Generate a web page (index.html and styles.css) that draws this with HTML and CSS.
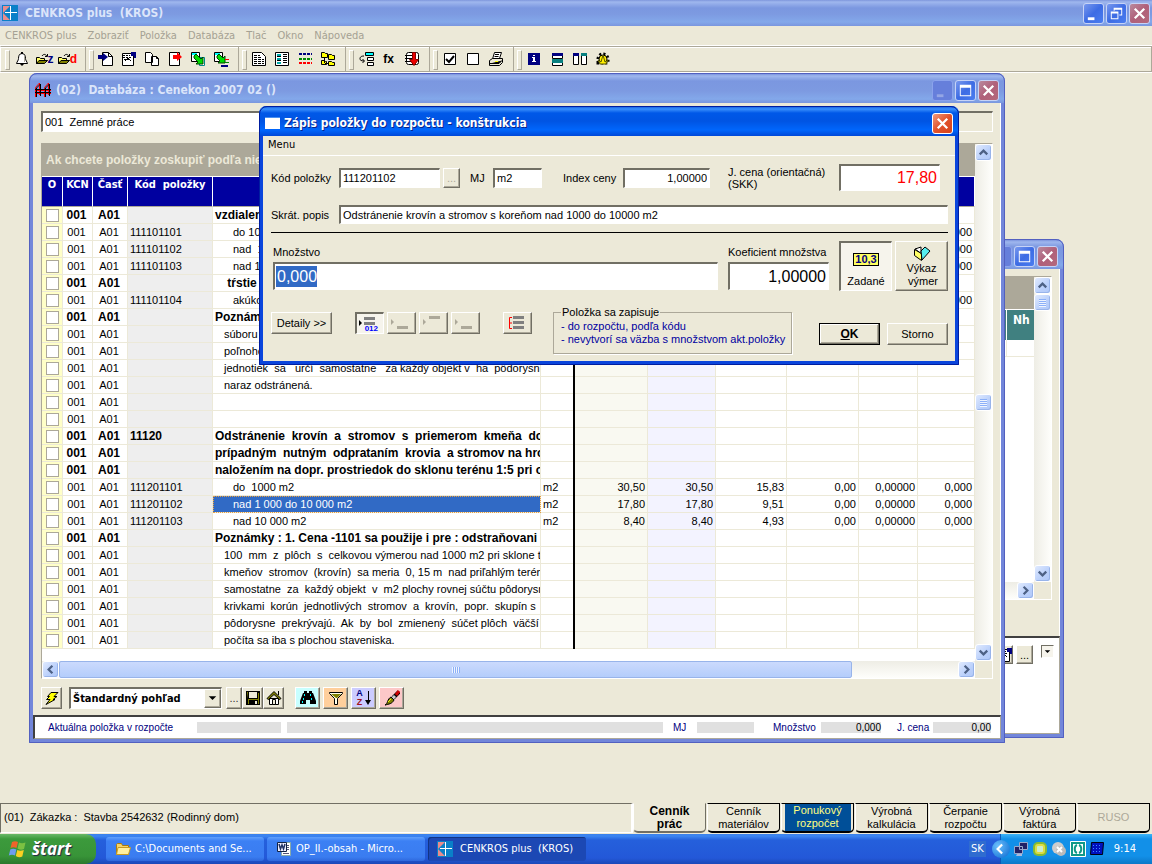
FILE: index.html
```html
<!DOCTYPE html>
<html lang="sk">
<head>
<meta charset="utf-8">
<title>CENKROS plus (KROS)</title>
<link rel="stylesheet" href="styles.css">
</head>
<body>
<svg class="defs" aria-hidden="true">
  <symbol id="logo" viewBox="0 0 16 16"><path fill="#0a80c8" d="M0 0h16v16H0z"/><path fill="#e98c8c" d="M1 1h7L1 8zM1 8l7 7H1z"/><path stroke="#fff" d="M8.500 1v14M3 7.500h12"/></symbol>
  <symbol id="min" viewBox="0 0 20 20"><path fill="#fff" d="M4 14h7v3H4z"/></symbol>
  <symbol id="max" viewBox="0 0 20 20"><path fill="#fff" fill-rule="evenodd" d="M4 4h12v12H4zM5 7v8h10V7z"/></symbol>
  <symbol id="restore" viewBox="0 0 20 20"><path fill="#fff" fill-rule="evenodd" d="M7 4h9v8h-3v-1h2V6H8v1H7zM4 8h8v8H4zM5 10v5h6v-5z"/></symbol>
  <symbol id="close" viewBox="0 0 20 20"><path stroke="#fff" stroke-width="2.400" d="M5 5l10 10M15 5L5 15"/></symbol>
  <symbol id="up" viewBox="0 0 16 16"><path fill="none" stroke="#4d6185" stroke-width="2.400" d="M4 10l4-4 4 4"/></symbol>
  <symbol id="down" viewBox="0 0 16 16"><path fill="none" stroke="#4d6185" stroke-width="2.400" d="M4 6l4 4 4-4"/></symbol>
  <symbol id="left" viewBox="0 0 16 16"><path fill="none" stroke="#4d6185" stroke-width="2.400" d="M10 4L6 8l4 4"/></symbol>
  <symbol id="right" viewBox="0 0 16 16"><path fill="none" stroke="#4d6185" stroke-width="2.400" d="M6 4l4 4-4 4"/></symbol>
  <symbol id="tri" viewBox="0 0 16 16"><path d="M4 6h8l-4 4z"/></symbol>
  <symbol id="fence" viewBox="0 0 16 16"><path fill="none" stroke="#f00" d="M.5 15V5.500l4-4.500v12M9.500 15V5.500l4-4.500v12M0 8.500h16M0 11.500h16"/><path fill="none" stroke="#000" d="M1.500 15V6l4-4v12M10.500 15V6l4-4v12M0 7.500h16M0 10.500h16"/></symbol>
  <symbol id="bell" viewBox="0 0 16 16"><path fill="#fff" stroke="#000" d="M8 2.500c-3 0-3.500 3-3.500 5S3 10.500 2.500 12.500h11C13 10.500 11.500 9.500 11.500 7.500s-.5-5-3.500-5z"/><path d="M7 1h2v2H7zM6 13h4l-2 2z"/><path fill="#aca899" d="M10 5h1v6h-1z"/></symbol>
  <symbol id="open" viewBox="0 0 12 14"><path fill="#ff6" stroke="#000" d="M.5 11.500v-6h3l1 1h4v2H11l-3 3z"/><path fill="#808000" stroke="#000" d="M.5 11.500l2.500-3h8.500l-3 3z"/><path fill="none" stroke="#000" d="M6 4c2-3 4-1 5 0M9 4.500h2.500V2"/></symbol>
  <symbol id="pagein" viewBox="0 0 16 16"><path fill="#fff" stroke="#000" d="M4.500 1.500h6l4 4v9h-10z"/><path fill="none" stroke="#000" d="M10.500 1.500v4h4"/><path fill="#000080" d="M0 4h5V2l5 4-5 4V8H0z"/></symbol>
  <symbol id="props" viewBox="0 0 16 16"><path fill="#fff" stroke="#000" d="M1.500 2.500h11v12h-11z"/><path stroke="#000" stroke-dasharray="2 1" d="M2 4.500h7M2 6.500h8M3 8.500h6"/><path fill="#000080" d="M10 1h5v6h-2V5h-3z"/><path fill="none" stroke="#000" d="M4 10l3-3 3 3"/></symbol>
  <symbol id="copy" viewBox="0 0 16 16"><path fill="#fff" stroke="#000" d="M1.500 1.500h5l2 2v8h-7zM7.500 5.500h5l2 2v7h-7z"/><path fill="none" stroke="#000" d="M12.500 5.500v2h2"/></symbol>
  <symbol id="pageout" viewBox="0 0 16 16"><path fill="#fff" stroke="#000" d="M2.500 1.500h10v13h-10z"/><path fill="#f00" d="M6 4h4V1l5 5-5 4V8H6z"/></symbol>
  <symbol id="exp1" viewBox="0 0 16 16"><path fill="#fff" stroke="#000" d="M1.500 1.500h8v9h-8z"/><path fill="#0ff" d="M2 2h5v2H2z"/><path fill="#fff" stroke="#088" d="M9.500 6.500h5v8h-5z"/><path fill="#0d0" stroke="#040" d="M4 5l2-2 5 5 2-2v7H6l2-2-4-4z"/></symbol>
  <symbol id="exp2" viewBox="0 0 16 16"><path fill="#fff" stroke="#000" d="M1.500 1.500h8v9h-8z"/><path fill="#0ff" d="M2 2h5v2H2z"/><path fill="#0d0" stroke="#040" d="M4 5l2-2 4 4 2-2v7H5l2-2-3-3z"/><path fill="#f00" d="M12 8h4v1h-4z"/><path fill="#080" d="M12 11h4v1h-4z"/><path fill="#000080" d="M8 14h7v2H8z"/></symbol>
  <symbol id="doc" viewBox="0 0 16 16"><path fill="#fff" stroke="#000" d="M1.500 1.500h9l4 4v9h-13z"/><path stroke="#000" stroke-dasharray="3 1" d="M3 4.500h6M3 6.500h7M3 8.500h10M3 10.500h10M3 12.500h10"/></symbol>
  <symbol id="form" viewBox="0 0 16 16"><path fill="#fff" stroke="#000" d="M1.500 1.500h13v13h-13z"/><path stroke="#0aa" stroke-width="2" d="M3 4h4M3 8h4M3 12h4"/><path stroke="#000" d="M3 5.500h4M3 9.500h4M9 3.500h4M9 5.500h4M9 7.500h4M9 9.500h4M9 11.500h4"/></symbol>
  <symbol id="lines" viewBox="0 0 16 16"><path stroke="#000080" stroke-width="2" stroke-dasharray="3 1" d="M2 3h13"/><path stroke="#080" stroke-width="2" stroke-dasharray="3 1" d="M2 8h13"/><path stroke="#f00" stroke-width="2" stroke-dasharray="3 1" d="M2 12h13"/></symbol>
  <symbol id="folders" viewBox="0 0 16 16"><path fill="#ff0" stroke="#000" d="M1.500 1.500h3l1 1h2v4h-6zM8.500 3.500h3l1 1h2v4h-6zM8.500 10.500h3l1 1h2v3h-6zM1.500 9.500h3l1 1h1v3h-5z"/><path stroke="#000" d="M4.500 7v5M5 12.500h3"/></symbol>
  <symbol id="tree" viewBox="0 0 16 16"><path fill="#0ff" stroke="#000" d="M7.500 1.500h8v3h-8z"/><path fill="#fff" stroke="#000" d="M9.500 6.500h6v3h-6zM9.500 11.500h6v3h-6z"/><path fill="none" stroke="#000" d="M6 5c-4 0-4 2-4 3s1 2 4 2M4.500 8l2 2-2 2"/></symbol>
  <symbol id="dbdown" viewBox="0 0 16 16"><rect x="2.500" y="1.500" width="12" height="12" rx="2" fill="#fff" stroke="#000"/><path stroke="#000" d="M1 4.500h9M1 7.500h9M1 10.500h9"/><path fill="#e00" stroke="#800" d="M8.500 1.500h3v7h3L10 14.500 5.500 8.500h3z"/></symbol>
  <symbol id="checked" viewBox="0 0 16 16"><path fill="#fff" stroke="#000" d="M2.500 2.500h11v11h-11z"/><path fill="none" stroke="#000" stroke-width="2" d="M4 8l3 3 5-6"/></symbol>
  <symbol id="unchecked" viewBox="0 0 16 16"><path fill="#fff" stroke="#000" d="M2.500 2.500h11v11h-11z"/></symbol>
  <symbol id="print" viewBox="0 0 16 16"><path fill="#fff" stroke="#000" d="M4.500 8l2-6.500h7l-2 6"/><path stroke="#000" d="M7 3.500h4M6.500 5.500h4"/><path fill="#ece9d8" stroke="#000" d="M1.500 9.500l3-2h10v4l-3 3h-10z"/><path stroke="#000" d="M2 12.500h9l3-3"/><path fill="#ff0" d="M7 10h3v1H7z"/></symbol>
  <symbol id="info" viewBox="0 0 16 16"><path fill="#000080" d="M2 2h12v12H2z"/><path fill="#fff" d="M7 4h2v1H7zM6 6h3v4h1v1H6v-1h1V7H6z"/></symbol>
  <symbol id="tileh" viewBox="0 0 16 16"><path fill="#fff" stroke="#000" d="M3.500 2.500h10v5h-10zM3.500 9.500h10v5h-10z"/><path fill="#000080" d="M3 2h11v3H3z"/><path fill="#088080" d="M3 8h11v4H3z"/></symbol>
  <symbol id="tilev" viewBox="0 0 16 16"><path fill="#fff" stroke="#000" d="M1.500 2.500h5v11h-5zM9.500 2.500h5v11h-5z"/><path fill="#000080" d="M1 2h6v3H1z"/><path fill="#088080" d="M9 2h6v3H9z"/></symbol>
  <symbol id="gear" viewBox="0 0 16 16"><path fill="none" stroke="#000" stroke-width="3" stroke-dasharray="2 2" d="M3 12V8a5 5 0 0 1 10 0v4z"/><circle cx="8" cy="8" r="4" fill="#fe0" stroke="#000"/><path fill="#fe0" stroke="#550" d="M3 9l3 2 2-7 2 7 3-2-2 4H5z"/></symbol>
  <symbol id="bolt" viewBox="0 0 16 16"><path fill="#ff0" stroke="#000" d="M7 2.500h7l-4 4h3l-4 3h2l-9 5 4-5H2.500l3-3H3.500z"/></symbol>
  <symbol id="save" viewBox="0 0 16 16"><path fill="#000" d="M1 1h14v14H1z"/><path fill="#ece9d8" d="M4 2h8v6H4zM10 11h2v3h-2z"/><path fill="#808000" d="M2 2h1v12h1v-4h9v4h1V3h-1v6H3z"/></symbol>
  <symbol id="home" viewBox="0 0 16 16"><path fill="#fff" stroke="#000" d="M3.500 8.500h9v6h-9z"/><path fill="#808000" stroke="#000" d="M1 8.500L8 1.500l7 7-1.500 1L8 4.500l-5.500 5z"/><path stroke="#000" d="M12.500 1v4"/><path fill="#ece9d8" stroke="#000" d="M6.500 9.500h3v5h-3z"/></symbol>
  <symbol id="bino" viewBox="0 0 16 16"><path d="M4 1h3v2h2V1h3v2h1l3 8v3h-6v-4H6v4H0v-3l3-8h1z"/><path fill="#0ff" d="M4 4h1v2H4zM3 8h1v2H3zM2 11h1v2H2zM10 4h1v2h-1zM11 8h1v2h-1z"/></symbol>
  <symbol id="filter" viewBox="0 0 16 16"><path fill="#ffe" stroke="#000" d="M1.500 2.500h13v1l-5 5v6h-3v-6l-5-5z"/><path fill="#808000" d="M3 4h10l-4 4H8z"/></symbol>
  <symbol id="brush" viewBox="0 0 16 16"><path stroke="#000" stroke-width="4" d="M9 8l6-6"/><path stroke="#c00" stroke-width="3" d="M12 5l3-4"/><path stroke="#ccc" stroke-width="3" d="M8 9l3-3"/><path fill="#808000" stroke="#000" d="M7 7l3 3c-2 4-5 4-9 5 3-1 2-6 6-8z"/><path stroke="#ff0" d="M4 12l3-3"/></symbol>
  <symbol id="lineins" viewBox="0 0 24 16"><path d="M1 4l3 3-3 3z"/><path stroke="#808080" stroke-width="3" d="M6 2.500h11M6 7.500h11"/></symbol>
  <symbol id="linelow" viewBox="0 0 24 16"><path fill="#aca899" d="M1 4l3 3-3 3z"/><path stroke="#aca899" stroke-width="3" d="M7 12.500h11"/></symbol>
  <symbol id="linetop" viewBox="0 0 24 16"><path fill="#aca899" d="M1 4l3 3-3 3z"/><path stroke="#aca899" stroke-width="3" d="M7 2.500h11"/></symbol>
  <symbol id="outline" viewBox="0 0 24 16"><path fill="none" stroke="#f00" d="M6 2.500H3.500v11H6M3.500 8H6"/><path stroke="#808080" stroke-width="3" d="M7 2.500h11M7 7.500h11M7 12.500h11"/></symbol>
  <symbol id="book" viewBox="0 0 18 16"><path fill="#ff6" stroke="#000" d="M1.500 3.500l7 4v7l-7-5z"/><path fill="#fff" stroke="#000" d="M2 3l6-2v5l1 2z"/><path fill="#5ee" stroke="#000" d="M8 5l4-4 5 4-8 9z"/></symbol>
  <symbol id="flag" viewBox="0 0 20 20"><path fill="#f0632a" d="M4 3c2-1 4-1 6 0L8.500 9c-2-1-4-1-6 0z"/><path fill="#7cc142" d="M11 3.500c2 1 4 1 6.500 0L16 10c-2 1-4 1-6.500-.5z"/><path fill="#6f9df0" d="M2.300 10.500c2-1 4-1 6 0L7 16.500c-2-1-4-1-6.200 0z"/><path fill="#fbd022" d="M9.300 11c2 1 4 1 6.500 0l-1.500 6.500c-2 1-4 1-6.500-.5z"/></symbol>
  <symbol id="folder" viewBox="0 0 16 16"><path fill="#f6d468" stroke="#a87a10" d="M1.500 13.500v-10l1-1h4l1 2h6v9z"/><path fill="#ffef9e" stroke="#c89a20" d="M1.500 13.500l1.500-7h12.500l-2 7z"/></symbol>
  <symbol id="word" viewBox="0 0 16 16"><path fill="#fff" stroke="#8aa" d="M5.500 1.500h9v13h-9z"/><path stroke="#557" d="M11 4.500h2M11 6.500h2M11 8.500h2M7 12.500h6"/><path fill="#eef" stroke="#124" d="M1.500 1.500h9v9h-9z"/><path fill="none" stroke="#236" stroke-width="1.500" d="M3 3l1.500 5L6 4l1.500 4L9 3"/></symbol>
  <symbol id="net" viewBox="0 0 16 16"><path fill="#226" stroke="#9ac" d="M6.500 1.500h8v7h-8zM1.500 5.500h8v7h-8z"/><path fill="#abd" d="M4 13h5v2H3z"/></symbol>
  <symbol id="sun" viewBox="0 0 16 16"><rect x="1" y="1" width="14" height="14" rx="5" fill="#8b3"/><rect x="4" y="4" width="8" height="8" rx="2" fill="#cec" stroke="#dd4" stroke-width="2"/></symbol>
  <symbol id="mute" viewBox="0 0 16 16"><circle cx="7" cy="7" r="6" fill="#ccc"/><circle cx="10" cy="10" r="5" fill="#bbb"/><path stroke="#fff" stroke-width="2" d="M6 6l5 5M11 6l-5 5"/></symbol>
  <symbol id="sync" viewBox="0 0 16 16"><path fill="#198" stroke="#fff" d="M.5 .5h15v15H.5z"/><path fill="#fff" d="M3 3h10v10H3z"/><path fill="none" stroke="#198" stroke-width="2" d="M7 4c-3 1-3 7 0 8M9 4c3 1 3 7 0 8"/></symbol>
  <symbol id="chip" viewBox="0 0 16 16"><path fill="#0010c0" stroke="#001" d="M2.500 1.500h12l-1 12h-12z"/><path stroke="#48f" stroke-dasharray="1 2" d="M4 4.500h8M4 7.500h8M4 10.500h7"/></symbol>
</svg>

<header class="caption">
  <svg class="ic"><use href="#logo"/></svg><h1>CENKROS plus&nbsp; (KROS)</h1>
  <div class="winbtns">
    <button class="wb" aria-label="Minimalizovať"><svg><use href="#min"/></svg></button>
    <button class="wb" aria-label="Obnoviť"><svg><use href="#restore"/></svg></button>
    <button class="wb dimred" aria-label="Zavrieť"><svg><use href="#close"/></svg></button>
  </div>
</header>
<nav class="menubar">
  <span>CENKROS plus</span><span>Zobraziť</span><span>Položka</span><span>Databáza</span><span>Tlač</span><span>Okno</span><span>Nápoveda</span>
</nav>
<div class="toolbar">
  <div class="tgroup">
    <button aria-label="Upozornenia"><svg><use href="#bell"/></svg></button>
    <button class="two" aria-label="Otvoriť z"><svg><use href="#open"/></svg><b class="z">z</b></button>
    <button class="two" aria-label="Otvoriť d"><svg><use href="#open"/></svg><b class="d">d</b></button>
  </div>
  <div class="tgroup">
    <button aria-label="Vložiť"><svg><use href="#pagein"/></svg></button>
    <button aria-label="Vlastnosti"><svg><use href="#props"/></svg></button>
    <button aria-label="Kopírovať"><svg><use href="#copy"/></svg></button>
    <button aria-label="Vybrať"><svg><use href="#pageout"/></svg></button>
    <button aria-label="Presun"><svg><use href="#exp1"/></svg></button>
    <button aria-label="Presun riadkov"><svg><use href="#exp2"/></svg></button>
  </div>
  <div class="tgroup">
    <button aria-label="Dokument"><svg><use href="#doc"/></svg></button>
    <button aria-label="Formulár"><svg><use href="#form"/></svg></button>
    <button aria-label="Riadky"><svg><use href="#lines"/></svg></button>
    <button aria-label="Skupiny"><svg><use href="#folders"/></svg></button>
  </div>
  <div class="tgroup">
    <button aria-label="Strom"><svg><use href="#tree"/></svg></button>
    <button aria-label="Funkcia"><b class="fx">fx</b></button>
    <button aria-label="Stiahnuť"><svg><use href="#dbdown"/></svg></button>
  </div>
  <div class="tgroup">
    <button aria-label="Označiť"><svg><use href="#checked"/></svg></button>
    <button aria-label="Zrušiť označenie"><svg><use href="#unchecked"/></svg></button>
    <button aria-label="Tlač"><svg><use href="#print"/></svg></button>
  </div>
  <div class="tgroup last">
    <button aria-label="Info"><svg><use href="#info"/></svg></button>
    <button aria-label="Vodorovne"><svg><use href="#tileh"/></svg></button>
    <button aria-label="Zvislo"><svg><use href="#tilev"/></svg></button>
    <button aria-label="Nastavenia"><svg><use href="#gear"/></svg></button>
  </div>
</div>

<main class="desk">
  <section class="win back">
    <div class="wtitle">
      <div class="winbtns">
        <button class="wb dim" aria-label="Minimalizovať"></button>
        <button class="wb" aria-label="Maximalizovať"><svg><use href="#max"/></svg></button>
        <button class="wb dimred" aria-label="Zavrieť"><svg><use href="#close"/></svg></button>
      </div>
    </div>
    <div class="bbody">
      <div class="grid">
        <div class="gmain">
          <div class="groupbar"></div>
          <div class="nhrow"><span>Nh</span></div>
          <div class="nhcell"><span></span></div>
        </div>
        <div class="vs"><i class="sb"><svg><use href="#up"/></svg></i><i class="sb grip"></i><i class="push"></i><i class="sb"><svg><use href="#down"/></svg></i></div>
        <div class="hs"><i class="push"></i><i class="sb"><svg><use href="#right"/></svg></i></div>
        <div class="corner"></div>
      </div>
      <div class="bpanel">
        <button class="bev sm" aria-label="Vlastnosti"><svg class="ic"><use href="#props"/></svg></button>
        <button class="bev sm">...</button>
        <button class="ddown" aria-label="Rozbaliť"><svg><use href="#tri"/></svg></button>
      </div>
    </div>
  </section>

  <section class="win db">
    <div class="wtitle">
      <svg class="ic"><use href="#fence"/></svg><h2>(02)&nbsp; Databáza : Cenekon 2007 02 ()</h2>
      <div class="winbtns">
        <button class="wb dim" aria-label="Minimalizovať"><svg><use href="#min"/></svg></button>
        <button class="wb" aria-label="Maximalizovať"><svg><use href="#max"/></svg></button>
        <button class="wb dimred" aria-label="Zavrieť"><svg><use href="#close"/></svg></button>
      </div>
    </div>
    <div class="dbody">
      <div class="path"><input class="field" aria-label="Kapitola" value="001  Zemné práce"></div>
      <div class="grid">
        <div class="gmain">
          <div class="groupbar">Ak chcete položky zoskupiť podľa nie</div>
          <table class="items">
            <colgroup><col class="c1"><col class="c2"><col class="c3"><col class="c4"><col><col class="c6"><col class="c7"><col class="c8"><col class="c9"><col class="c10"><col class="c11"><col class="c12"></colgroup>
            <thead><tr><th>O<th>KCN<th>Časť<th>Kód&nbsp; položky<th><th><th><th><th><th><th><th></tr></thead>
            <tbody>
            <tr class="b"><td><input type="checkbox" aria-label="Označiť"><td>001<td>A01<td><td>vzdialen<td><td><td><td><td><td><td>
            <tr class="i"><td><input type="checkbox" aria-label="Označiť"><td>001<td>A01<td>111101101<td>do 1000<td>m2<td><td><td><td>0,00<td>0,00000<td>0,000
            <tr class="i"><td><input type="checkbox" aria-label="Označiť"><td>001<td>A01<td>111101102<td>nad  1000<td>m2<td><td><td><td>0,00<td>0,00000<td>0,000
            <tr class="i"><td><input type="checkbox" aria-label="Označiť"><td>001<td>A01<td>111101103<td>nad 10 000<td>m2<td><td><td><td>0,00<td>0,00000<td>0,000
            <tr class="b n"><td><input type="checkbox" aria-label="Označiť"><td>001<td>A01<td><td> tŕstie<td><td><td><td><td><td><td>
            <tr class="i"><td><input type="checkbox" aria-label="Označiť"><td>001<td>A01<td>111101104<td>akúkoľvek<td>m2<td><td><td><td>0,00<td>0,00000<td>0,000
            <tr class="b"><td><input type="checkbox" aria-label="Označiť"><td>001<td>A01<td><td>Poznámky :<td><td><td><td><td><td><td>
            <tr class="n"><td><input type="checkbox" aria-label="Označiť"><td>001<td>A01<td><td>súboru<td><td><td><td><td><td><td>
            <tr class="n"><td><input type="checkbox" aria-label="Označiť"><td>001<td>A01<td><td>poľnohosp.<td><td><td><td><td><td><td>
            <tr class="n"><td><input type="checkbox" aria-label="Označiť"><td>001<td>A01<td><td>jednotiek  sa   určí  samostatne   za každý objekt v  ha  pôdorysn<td><td><td><td><td><td><td>
            <tr class="n"><td><input type="checkbox" aria-label="Označiť"><td>001<td>A01<td><td>naraz odstránená.<td><td><td><td><td><td><td>
            <tr><td><input type="checkbox" aria-label="Označiť"><td>001<td>A01<td><td><td><td><td><td><td><td><td>
            <tr><td><input type="checkbox" aria-label="Označiť"><td>001<td>A01<td><td><td><td><td><td><td><td><td>
            <tr class="b"><td><input type="checkbox" aria-label="Označiť"><td>001<td>A01<td>11120<td>Odstránenie  krovín  a  stromov  s  priemerom  kmeňa  do<td><td><td><td><td><td><td>
            <tr class="b"><td><input type="checkbox" aria-label="Označiť"><td>001<td>A01<td><td>prípadným  nutným  odprataním  krovia  a stromov na hro<td><td><td><td><td><td><td>
            <tr class="b"><td><input type="checkbox" aria-label="Označiť"><td>001<td>A01<td><td>naložením na dopr. prostriedok do sklonu terénu 1:5 pri o<td><td><td><td><td><td><td>
            <tr class="i"><td><input type="checkbox" aria-label="Označiť"><td>001<td>A01<td>111201101<td>do  1000 m2<td>m2<td>30,50<td>30,50<td>15,83<td>0,00<td>0,00000<td>0,000
            <tr class="i sel"><td><input type="checkbox" aria-label="Označiť"><td>001<td>A01<td>111201102<td>nad 1 000 do 10 000 m2<td>m2<td>17,80<td>17,80<td>9,51<td>0,00<td>0,00000<td>0,000
            <tr class="i"><td><input type="checkbox" aria-label="Označiť"><td>001<td>A01<td>111201103<td>nad 10 000 m2<td>m2<td>8,40<td>8,40<td>4,93<td>0,00<td>0,00000<td>0,000
            <tr class="b"><td><input type="checkbox" aria-label="Označiť"><td>001<td>A01<td><td>Poznámky : 1. Cena -1101 sa použije i pre : odstraňovani<td><td><td><td><td><td><td>
            <tr class="n"><td><input type="checkbox" aria-label="Označiť"><td>001<td>A01<td><td>100  mm  z  plôch  s  celkovou výmerou nad 1000 m2 pri sklone te<td><td><td><td><td><td><td>
            <tr class="n"><td><input type="checkbox" aria-label="Označiť"><td>001<td>A01<td><td>kmeňov  stromov  (krovín)  sa meria  0, 15 m  nad priľahlým terén<td><td><td><td><td><td><td>
            <tr class="n"><td><input type="checkbox" aria-label="Označiť"><td>001<td>A01<td><td>samostatne  za  každý objekt  v  m2 plochy rovnej súčtu pôdorysn<td><td><td><td><td><td><td>
            <tr class="n"><td><input type="checkbox" aria-label="Označiť"><td>001<td>A01<td><td>krivkami  korún  jednotlivých  stromov  a  krovín,  popr.  skupín s<td><td><td><td><td><td><td>
            <tr class="n"><td><input type="checkbox" aria-label="Označiť"><td>001<td>A01<td><td>pôdorysne  prekrývajú.  Ak  by  bol  zmienený  súčet plôch  väčší<td><td><td><td><td><td><td>
            <tr class="n"><td><input type="checkbox" aria-label="Označiť"><td>001<td>A01<td><td>počíta sa iba s plochou staveniska.<td><td><td><td><td><td><td>
            </tbody>
          </table>
        </div>
        <div class="vs"><i class="sb"><svg><use href="#up"/></svg></i><i class="push"></i><i class="sb grip"></i><i class="push"></i><i class="sb"><svg><use href="#down"/></svg></i></div>
        <div class="hs"><i class="sb"><svg><use href="#left"/></svg></i><i class="thumb"></i><i class="push"></i><i class="sb"><svg><use href="#right"/></svg></i></div>
        <div class="corner"></div>
      </div>
      <div class="dbtools">
        <button class="bev tb" aria-label="Spustiť"><svg class="ic"><use href="#bolt"/></svg></button>
        <div class="combo"><select aria-label="Pohľad"><option>Štandardný pohľad</option></select><i class="bev"><svg><use href="#tri"/></svg></i></div>
        <div class="trio">
          <button class="bev dots">...</button>
          <button class="bev tb" aria-label="Uložiť"><svg class="ic"><use href="#save"/></svg></button>
          <button class="bev tb" aria-label="Domov"><svg class="ic"><use href="#home"/></svg></button>
        </div>
        <div class="quad">
          <button class="bev cy" aria-label="Hľadať"><svg class="ic"><use href="#bino"/></svg></button>
          <button class="bev or" aria-label="Filter"><svg class="ic"><use href="#filter"/></svg></button>
          <button class="bev vi az" aria-label="Triediť"><span><b>A</b><b class="zz">Z</b></span><svg viewBox="0 0 6 16"><path stroke="#000" stroke-width="1" d="M3.500 1v11"/><path d="M0 10h6l-3 5z"/></svg></button>
          <button class="bev pk" aria-label="Farby"><svg class="ic"><use href="#brush"/></svg></button>
        </div>
      </div>
    </div>
    <div class="dbinfo">
      <span class="l1">Aktuálna položka v rozpočte</span><output class="o1"></output><output class="o2"></output>
      <span class="l2">MJ</span><output class="o3"></output>
      <span class="l3">Množstvo</span><output class="o4">0,000</output>
      <span class="l4">J. cena</span><output class="o5">0,00</output>
    </div>
  </section>

  <section class="dlg" role="dialog" aria-label="Zápis položky do rozpočtu">
    <div class="dtitle"><i class="appicon"></i><h2>Zápis položky do rozpočtu - konštrukcia</h2>
      <button class="wb red" aria-label="Zavrieť"><svg><use href="#close"/></svg></button></div>
    <div class="dmenu">Menu</div>
    <form class="dform">
      <div class="row ra">
        <label class="lab" for="kod">Kód položky</label><input class="field kod" id="kod" value="111201102">
        <button type="button" class="bev dd3">...</button>
        <label class="mjl" for="mj">MJ</label><input class="field mj" id="mj" value="m2">
        <label class="idl" for="idx">Index ceny</label><input class="field idx" id="idx" value="1,00000">
        <label class="jcl" for="jc">J. cena (orientačná)<br>(SKK)</label><input class="field jc" id="jc" value="17,80">
      </div>
      <div class="row rb"><label class="lab" for="pop">Skrát. popis</label><input class="field pop" id="pop" value="Odstránenie krovín a stromov s koreňom nad 1000 do 10000 m2"></div>
      <hr>
      <div class="row rc">
        <div class="stack mn"><label for="mnoz">Množstvo</label><input class="field big marked" id="mnoz" value="0,000"></div>
        <div class="stack kf"><label for="koef">Koeficient množstva</label><input class="field big right" id="koef" value="1,00000"></div>
        <div class="pair">
          <button type="button" class="tall pressed"><b class="num">10,3</b><span>Zadané</span></button>
          <button type="button" class="tall bev"><svg class="bk"><use href="#book"/></svg><span>Výkaz<br>&nbsp;výmer</span></button>
        </div>
      </div>
      <div class="row rd">
        <button type="button" class="bev det">Detaily &gt;&gt;</button>
        <div class="modes">
          <button type="button" class="mode pressed" aria-label="Režim 1"><svg><use href="#lineins"/></svg><b>012</b></button>
          <button type="button" class="mode bev" aria-label="Režim 2"><svg><use href="#linelow"/></svg></button>
          <button type="button" class="mode bev" aria-label="Režim 3"><svg><use href="#linetop"/></svg></button>
          <button type="button" class="mode bev" aria-label="Režim 4"><svg><use href="#linelow"/></svg></button>
        </div>
        <button type="button" class="mode bev out" aria-label="Osnova"><svg><use href="#outline"/></svg></button>
        <fieldset><legend>Položka sa zapisuje</legend>- do rozpočtu, podľa kódu<br>- nevytvorí sa väzba s množstvom akt.položky</fieldset>
        <div class="okrow">
          <button type="button" class="ok"><u>O</u>K</button>
          <button type="button" class="bev storno">Storno</button>
        </div>
      </div>
    </form>
  </section>
</main>

<footer class="status">
  <div class="job">(01)&nbsp; Zákazka :&nbsp; Stavba 2542632 (Rodinný dom)</div>
  <div class="tabs">
    <button class="tab on">Cenník<br>prác</button>
    <button class="tab">Cenník<br>materiálov</button>
    <button class="tab blue"><span>Ponukový<br>rozpočet</span></button>
    <button class="tab">Výrobná<br>kalkulácia</button>
    <button class="tab">Čerpanie<br>rozpočtu</button>
    <button class="tab">Výrobná<br>faktúra</button>
    <button class="tab off" disabled>RUSO</button>
  </div>
</footer>
<div class="taskbar">
  <button class="start"><svg><use href="#flag"/></svg>štart</button>
  <div class="tasks">
    <button><svg class="ic"><use href="#folder"/></svg>C:\Documents and Se...</button>
    <button><svg class="ic"><use href="#word"/></svg>OP_II.-obsah - Micro...</button>
    <button class="act"><svg class="ic"><use href="#logo"/></svg>CENKROS plus&nbsp; (KROS)</button>
  </div>
  <span class="lang">SK</span>
  <div class="tray">
    <button class="chev" aria-label="Zobraziť ikony"><svg viewBox="0 0 16 16"><path fill="none" stroke="#fff" stroke-width="2" d="M9 4L5 8l4 4"/></svg></button>
    <svg class="ic"><use href="#net"/></svg><svg class="ic"><use href="#sun"/></svg><svg class="ic"><use href="#mute"/></svg><svg class="ic"><use href="#sync"/></svg><svg class="ic"><use href="#chip"/></svg>
    <time>9:14</time>
  </div>
</div>
</body>
</html>
```
FILE: styles.css
```css
* { box-sizing: border-box; }
body { margin: 0; min-height: 100vh; display: flex; flex-direction: column; background: #ece9d8; color: #000; font: 11px/12px "Liberation Sans", Arial, sans-serif; overflow: hidden; }
button, input, select { font: inherit; color: inherit; margin: 0; padding: 0; border-radius: 0; }
button { border: 0; background: none; white-space: nowrap; }
h1, h2 { margin: 0; font: bold 12px/16px "DejaVu Sans Condensed", "DejaVu Sans", sans-serif; white-space: nowrap; }
svg { display: block; }
i { font-style: normal; display: block; }
.defs { position: absolute; width: 0; height: 0; }
.ic { width: 16px; height: 16px; flex: none; }

/* captions */
.caption { height: 26px; display: flex; align-items: center; gap: 7px; padding: 0 2px; background: linear-gradient(#7e96dc, #9fb7ee 2px, #7b97e0 8px, #7d9ae1 14px, #83a8ea 22px, #7a96de); color: #dbe5fa; }
.winbtns { display: flex; gap: 2px; margin-left: auto; }
.wb { width: 21px; height: 21px; border: 1px solid #c6d3f7; border-radius: 3px; background: linear-gradient(135deg, #7898ee, #3d6ce4 50%, #4a7df0); display: flex; align-items: center; justify-content: center; flex: none; }
.wb svg { width: 19px; height: 19px; }
.wb.dim { background: #667fdb; border-color: #8ba3ec; }
.wb.dim svg { opacity: .3; }
.wb.dimred { background: linear-gradient(135deg, #b98a9e, #b0607a 50%, #b4697c); }
.wb.red { background: linear-gradient(135deg, #f09a7c, #e0522c 50%, #d8431c); border-color: #fff; }

.menubar { height: 20px; display: flex; align-items: center; gap: 11px; padding: 0 5px; color: #a5a193; font: 11px/14px "DejaVu Sans Condensed", "DejaVu Sans", sans-serif; }
.toolbar { height: 26px; display: flex; padding-left: 1px; border: 1px solid #aca899; border-left-color: #fff; box-shadow: inset 0 1px #fff, 0 1px #fff, 0 -1px #fff; }
.tgroup { display: flex; align-items: center; padding: 0 6px 0 8px; border-right: 1px solid #aca899; position: relative; }
.tgroup.last { flex: 1; border: 0; }
.tgroup::before { content: ""; position: absolute; left: 3px; top: 3px; width: 3px; height: 18px; border: 1px solid #fff; border-right-color: #aca899; border-bottom-color: #aca899; }
.tgroup button { width: 23px; height: 22px; display: flex; align-items: center; justify-content: center; }
.tgroup svg { width: 16px; height: 16px; flex: none; }
.tgroup .two svg { width: 12px; height: 14px; }
.two b { font-size: 12px; }
.two .z { color: #000080; }
.two .d { color: #f00; }
.fx { font-size: 12px; }

/* workspace windows */
.desk { flex: 1; position: relative; }
.win { position: absolute; display: flex; flex-direction: column; border: solid #7286da; border-width: 0 4px 4px; border-radius: 8px 8px 0 0; background: #ece9d8; box-shadow: inset -1px -1px #fff; outline: 1px solid #5260c0; outline-offset: -1px; }
.win .wtitle { height: 30px; flex: none; margin: 0 -3px; display: flex; align-items: center; gap: 5px; padding: 4px 2px 0 5px; border-radius: 7px 7px 0 0; background: linear-gradient(#6a82d6, #9fb7ee 3px, #7b97e0 8px, #7d9ae1 18px, #83a8ea 26px, #7a96de); color: #dbe5fa; }
.back { left: 400px; right: 88px; top: 167px; bottom: 65px; }
.db { left: 29px; right: 147px; top: 1px; bottom: 60px; }
.wtitle .winbtns { margin-right: 3px; }

.bbody { flex: 1; display: flex; flex-direction: column; padding: 7px 0 0; }
.back .grid { flex: 1; margin: 0 8px 0; }
.grid { display: grid; grid-template: 1fr 17px / 1fr 17px; border: 1px solid #fff; border-top-color: #aca899; border-left-color: #aca899; min-height: 0; }
.gmain { background: #fff; overflow: hidden; }
.groupbar { height: 33px; background: #aca899; color: #ece9d8; font: bold 12px/33px "Liberation Sans", Arial, sans-serif; padding-left: 4px; border-bottom: 1px solid #fff; white-space: nowrap; overflow: hidden; }
.nhrow { height: 30px; background: #408080; color: #fff; font: bold 12px/20px "DejaVu Sans Condensed", sans-serif; display: flex; justify-content: flex-end; }
.nhrow span { border-left: 1px solid #fff; padding: 0 4px 0 6px; width: 28px; }
.nhcell { height: 17px; border-bottom: 1px solid #ece9d8; display: flex; justify-content: flex-end; }
.nhcell span { width: 28px; border-left: 1px solid #ece9d8; }
.vs { background: linear-gradient(90deg, #eeede5, #fefefb); display: flex; flex-direction: column; grid-row: 1; grid-column: 2; }
.hs { background: linear-gradient(#eeede5, #fefefb); display: flex; grid-row: 2; grid-column: 1; }
.corner { background: #ece9d8; }
.push { flex: 1; }
.sb { width: 17px; height: 17px; flex: none; border: 1px solid #fff; border-radius: 3px; background: linear-gradient(135deg, #e0eafe, #bad0fb 60%, #b0c8f8); box-shadow: inset -1px -1px #98b4ea; }
.sb svg { width: 15px; height: 15px; }
.sb.grip::after { content: ""; display: block; width: 7px; height: 8px; margin: 4px; background: repeating-linear-gradient(#8cb0f8 0 1px, #eef4fe 1px 2px); }
.thumb { flex: none; width: 85%; border: 1px solid #98b4ea; border-radius: 2px; background: linear-gradient(#cbdafd, #b4cdfb); display: grid; place-items: center; }
.thumb::after { content: ""; width: 8px; height: 6px; background: repeating-linear-gradient(90deg, #eef4fe 0 1px, #8cb0f8 1px 2px); }
.bpanel { height: 98px; flex: none; margin: 36px 0 0; background: #fff; border-top: 2px solid #404040; border-right: 1px solid #aca899; border-bottom: 1px solid #aca899; display: flex; justify-content: flex-end; align-items: flex-start; gap: 3px; padding: 7px 5px 0; }
.bev { background: #ece9d8; border: 1px solid #fff; border-right-color: #716f64; border-bottom-color: #716f64; box-shadow: inset -1px -1px #aca899; }
.bev.sm { width: 17px; height: 19px; overflow: hidden; }
.ddown { width: 13px; height: 13px; margin-left: 5px; border: 1px solid #716f64; border-right-color: #fff; border-bottom-color: #fff; background: #f6f4ec; }
.ddown svg { width: 11px; height: 11px; }

.dbody { flex: 1; display: flex; flex-direction: column; padding: 8px 8px 6px; min-height: 0; }
.field { border: 1px solid #fff; border-top: 2px solid #716f64; border-left: 2px solid #716f64; background: #fff; padding: 0 2px; outline: 0; min-width: 0; }
.path .field { width: 100%; height: 21px; display: block; background: linear-gradient(90deg, #fff 60%, #ece9d8 60%); }
.db .grid { flex: 1; margin-top: 11px; }
.items { width: 100%; table-layout: fixed; border-collapse: separate; border-spacing: 0; }
.c1 { width: 21px; } .c2 { width: 30px; } .c3 { width: 35px; } .c4 { width: 85px; } .c6 { width: 34px; } .c7 { width: 73px; }
.c8 { width: 68px; } .c9 { width: 71px; } .c10 { width: 72px; } .c11 { width: 59px; } .c12 { width: 57px; }
.items th { height: 30px; background: #0000a0; color: #fff; font: bold 11px/14px "DejaVu Sans Condensed", sans-serif; vertical-align: top; padding: 1px 0 0; border-right: 1px solid #fff; border-bottom: 1px solid #aca899; white-space: nowrap; overflow: hidden; }
.items td { height: 17px; padding: 0 2px; line-height: 15px; border-right: 1px solid #ece9d8; border-bottom: 1px solid #ece9d8; white-space: nowrap; overflow: hidden; text-align: right; }
.items td:nth-child(1) { background: #ffffc8; text-align: center; padding: 0; }
.items td:nth-child(2), .items td:nth-child(3) { text-align: center; padding: 0 2px 0 0; }
.items td:nth-child(4) { background: #eee; text-align: left; }
.items td:nth-child(5), .items td:nth-child(6) { text-align: left; }
.items td:nth-child(5) { white-space: pre; }
.items td:nth-child(6) { border-right: 2px solid #000; border-bottom: 0; box-shadow: inset 0 -1px #ece9d8; }
.items td:nth-child(7) { background: #f9f9f1; }
.items td:nth-child(8) { background: #f3f3ff; }
.items .n td:nth-child(5) { padding-left: 11px; }
.items .i td:nth-child(5) { padding-left: 20px; }
.items .sel td:nth-child(5) { background: #316ac5; color: #fff; outline: 1px dotted #e8a040; outline-offset: -1px; }
.items .b { font-weight: bold; font-size: 12px; }
.items input { appearance: none; display: block; width: 13px; height: 13px; margin: 0 auto; border: 1px solid #aca899; background: #fff; }
.dbtools { display: flex; height: 22px; margin-top: 8px; flex: none; align-items: stretch; }
.dbtools button { display: flex; align-items: center; justify-content: center; }
.tb { width: 21px; }
.combo { display: grid; width: 153px; margin: 0 4px 0 7px; border: 1px solid #fff; border-top: 2px solid #716f64; border-left: 2px solid #716f64; background: #fff; }
.combo select { grid-area: 1 / 1; appearance: none; border: 0; background: none; font: bold 11px/16px "DejaVu Sans Condensed", sans-serif; padding-left: 2px; outline: 0; }
.combo i { grid-area: 1 / 1; justify-self: end; width: 17px; pointer-events: none; }
.combo i svg { width: 15px; height: 16px; }
.trio { display: flex; }
.dots { width: 16px; color: #333; }
.quad { display: flex; gap: 3px; margin-left: 11px; }
.quad .bev { width: 25px; }
.bev.cy { background: #c8ffff; } .bev.or { background: #ffcf9c; } .bev.vi { background: #ccccff; } .bev.pk { background: #fcc8c8; }
.az { gap: 2px; }
.az span { display: flex; flex-direction: column; color: #000080; line-height: 9px; font-size: 9px; }
.az .zz { color: #a01020; }
.az svg { width: 6px; height: 16px; }
.dbinfo { height: 24px; flex: none; background: #fff; border: 1px solid #aca899; border-top: 2px solid #404040; border-left: 2px solid #404040; display: flex; align-items: center; padding: 0 9px 0 13px; color: #000080; font-size: 10px; white-space: nowrap; }
.dbinfo output { height: 11px; line-height: 12px; background: #e0e0e0; color: #000; text-align: right; }
.l1 { width: 149px; } .o1 { width: 84px; margin-right: 6px; } .o2 { flex: 1; }
.l2 { width: 34px; padding-left: 10px; } .o3 { width: 57px; } .l3 { width: 67px; padding-left: 19px; } .o4 { width: 60px; } .l4 { width: 52px; padding-left: 16px; } .o5 { width: 58px; }

/* dialog */
.dlg { position: absolute; left: 259px; top: 34px; width: 700px; border: 4px solid #0a45dc; border-top: 0; border-radius: 8px 8px 0 0; background: #ece9d8; outline: 1px solid #001ea0; outline-offset: -1px; }
.dtitle { height: 30px; margin: 0 -4px; padding: 4px 6px 0; display: flex; align-items: center; gap: 4px; border-radius: 7px 7px 0 0; background: linear-gradient(#0a50d8, #3a90fc 3px, #0058e8 7px, #0054e3 15px, #0066fc 24px, #0048d8); color: #fff; }
.dtitle h2 { text-shadow: 1px 1px #08248c; }
.dtitle .wb { margin-left: auto; }
.appicon { width: 15px; height: 12px; background: #fff; border-top: 1px solid #4a90f0; }
.dmenu { height: 20px; padding: 3px 5px; border-bottom: 1px solid #fff; font: 11px/12px "DejaVu Sans Condensed", sans-serif; }
.dform { padding: 8px 7px 7px 8px; white-space: nowrap; }
.row { display: flex; align-items: center; }
.lab { width: 68px; }
.kod { width: 101px; height: 20px; }
.dd3 { width: 17px; height: 20px; margin-left: 3px; color: #aca899; }
.mjl { width: 33px; padding-left: 10px; }
.mj { width: 49px; height: 20px; }
.idl { width: 81px; padding-left: 21px; }
.idx { width: 87px; height: 20px; text-align: right; }
.jcl { flex: 1; padding-left: 18px; }
.jc { width: 101px; height: 27px; margin-right: 8px; text-align: right; color: #f00; font-size: 16px; }
.rb { margin-top: 14px; }
.pop { flex: 1; height: 19px; }
hr { height: 1px; border: 0; background: #000; margin: 8px 0; }
.rc { align-items: stretch; gap: 10px; height: 50px; }
.stack { display: flex; flex-direction: column; justify-content: space-between; padding: 5px 0 1px; }
.mn { flex: 1; padding-left: 2px; }
.kf { width: 101px; }
.big { height: 28px; font-size: 16px; }
.right { text-align: right; }
.marked { color: #fff; background: #fff linear-gradient(#316ac5, #316ac5) no-repeat 1px 2px / 41px 21px; }
.pair { display: flex; gap: 3px; }
.tall { width: 53px; display: flex; flex-direction: column; align-items: center; justify-content: flex-end; padding-bottom: 2px; line-height: 13px; }
.pressed { border: 2px solid #716f64; border-right: 1px solid #fff; border-bottom: 1px solid #fff; background: #f6f4ec; }
.num { font-size: 11px; line-height: 11px; color: #000080; background: #ffff60; border: 1px solid #000; padding: 0 1px; margin-bottom: 9px; }
.bk { width: 18px; height: 16px; }
.rd { margin-top: 15px; align-items: flex-start; }
.det, .modes, .out { margin-top: 6px; }
.det { width: 61px; height: 22px; margin-right: 23px; }
.modes { display: flex; gap: 3px; }
.mode { width: 29px; height: 22px; position: relative; display: grid; place-items: center; }
.mode svg { width: 24px; height: 16px; }
.mode b { position: absolute; right: 5px; bottom: 0; color: #00f; font-size: 8px; line-height: 8px; }
.out { margin-left: 23px; }
fieldset { width: 239px; min-width: 0; height: 48px; margin: 0 0 0 21px; padding: 2px 7px 0; border: 1px solid #aca899; box-shadow: 1px 1px #fff; color: #0000a0; line-height: 13px; }
legend { color: #000; line-height: 12px; padding: 0 1px; }
.okrow { margin: 17px 0 0 auto; display: flex; gap: 7px; }
.ok { width: 61px; height: 22px; border: 1px solid #000; background: #ece9d8; font-weight: bold; font-size: 12px; box-shadow: inset -1px -1px #716f64, inset 1px 1px #fff, inset -2px -2px #aca899; }
.storno { width: 61px; height: 22px; }

/* status and taskbar */
.status { display: flex; height: 31px; flex: none; }
.job { flex: 1; border: 1px solid #716f64; border-bottom-color: #fff; border-right: 2px solid #fff; padding: 7px 3px; margin-bottom: 1px; }
.tabs { display: flex; width: 519px; padding-right: 2px; gap: 1px; }
.tab { flex: 1; height: 30px; border: 1px solid #000; border-left-color: #fff; border-bottom-width: 2px; border-radius: 0 0 5px 5px; line-height: 13px; display: flex; align-items: center; justify-content: center; }
.tab.on { font-weight: bold; font-size: 12px; border-color: #ece9d8 #716f64 #716f64 #fff; }
.tab.blue span { background: #004f98; color: #ffff80; width: 66px; padding-bottom: 1px; }
.tab.off { color: #aca899; }
.taskbar { height: 30px; flex: none; display: flex; align-items: stretch; background: linear-gradient(#3a80ea, #3c86f2 2px, #2560dc 6px, #2358d8 24px, #1a48b8); color: #fff; font: 11px/14px "DejaVu Sans Condensed", sans-serif; }
.start { width: 96px; display: flex; align-items: center; gap: 4px; padding-left: 8px; border-radius: 0 10px 10px 0; background: linear-gradient(#6ab868, #3c9a3c 5px, #389438 22px, #2a782c); font: italic bold 17px/20px "Open Sans", sans-serif; text-shadow: 1px 1px 1px #224; }
.start svg { width: 20px; height: 20px; }
.tasks { display: flex; gap: 3px; padding: 3px 0 3px 10px; flex: 1; }
.tasks button { flex: 0 1 158px; display: flex; align-items: center; gap: 4px; padding-left: 9px; border-radius: 3px; background: linear-gradient(#60a0fc, #3c80f4 4px, #3a7cf0 20px, #2e68dc); }
.tasks .act { background: #1c48b4; box-shadow: inset 1px 1px #123484; gap: 7px; }
.lang { align-self: center; background: #2f6cd0; padding: 1px 2px; margin-right: 14px; }
.tray { display: flex; align-items: center; gap: 3px; background: linear-gradient(#3cb4f8, #1290e8 5px, #1290e8 22px, #0c78c8); padding-right: 16px; border-left: 1px solid #0a58b8; }
.chev { width: 18px; height: 18px; border-radius: 9px; margin-left: -9px; background: radial-gradient(circle at 6px 6px, #6cc0fc, #0868d0); }
.chev svg { width: 18px; height: 18px; }
.tray time { margin-left: 6px; }
```
